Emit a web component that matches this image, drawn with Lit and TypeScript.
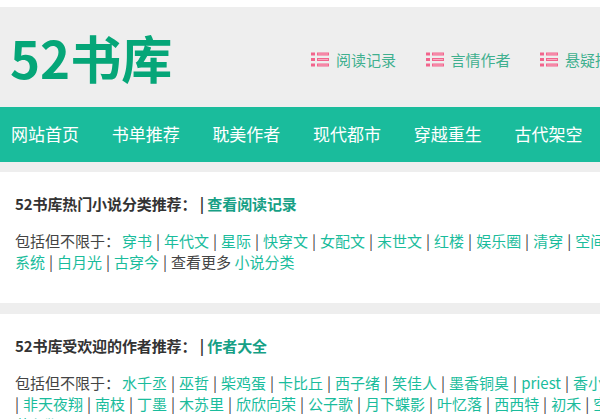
import { LitElement, html, css } from 'lit';
import { customElement } from 'lit/decorators.js';

const ListIcon = html`<svg class="icon" width="18" height="15" viewBox="0 0 18 15">
  <rect x="0" y="0.5" width="4" height="3"></rect><rect class="bar" x="6.5" y="1" width="11" height="2"></rect>
  <rect x="0" y="6" width="4" height="3"></rect><rect class="bar" x="6.5" y="6.5" width="11" height="2"></rect>
  <rect x="0" y="11.5" width="4" height="3"></rect><rect class="bar" x="6.5" y="12" width="11" height="2"></rect>
</svg>`;

const topLinks = ['阅读记录', '言情作者', '悬疑推理'];
const navItems = ['网站首页', '书单推荐', '耽美作者', '现代都市', '穿越重生', '古代架空', '玄幻奇幻'];

const sections = [
  {
    title: '52书库热门小说分类推荐：',
    more: '查看阅读记录',
    lines: [
      { label: true, lead: false, items: ['穿书', '年代文', '星际', '快穿文', '女配文', '末世文', '红楼', '娱乐圈', '清穿', '空间'] },
      { label: false, lead: false, items: ['系统', '白月光', '古穿今'], tail: true },
    ],
  },
  {
    title: '52书库受欢迎的作者推荐：',
    more: '作者大全',
    lines: [
      { label: true, lead: false, items: ['水千丞', '巫哲', '柴鸡蛋', '卡比丘', '西子绪', '笑佳人', '墨香铜臭', 'priest', '香小陌'] },
      { label: false, lead: true, items: ['非天夜翔', '南枝', '丁墨', '木苏里', '欣欣向荣', '公子歌', '月下蝶影', '叶忆落', '西西特', '初禾', '空梦'] },
      { label: false, lead: false, items: ['蓝色狮'] },
    ],
  },
];

@customElement('app-root')
export class AppRoot extends LitElement {
  static styles = css`
    :host {
      display: block;
      width: 600px;
      height: 419px;
      overflow: hidden;
      background: #fff;
      padding-top: 7px;
      box-sizing: border-box;
      font-family: 'Noto Sans CJK SC', 'Liberation Sans', sans-serif;
      font-size: 15px;
      color: #444;
    }
    .header {
      display: flex;
      align-items: center;
      height: 100px;
      background: #eee;
      padding-left: 10px;
      white-space: nowrap;
    }
    .logo {
      width: 301px;
      flex: none;
      font-size: 51px;
      font-weight: 700;
      line-height: 1;
      color: #05a678;
    }
    .top-links {
      display: flex;
      flex: none;
      margin-top: 4px;
    }
    .top-link {
      display: flex;
      align-items: center;
      gap: 7px;
      width: 114.5px;
      font-size: 15px;
      color: #3fb08f;
    }
    .icon {
      fill: #f2648c;
      flex: none;
    }
    .icon .bar {
      fill: #f9a9c0;
      stroke: #f2648c;
    }
    .nav {
      display: flex;
      height: 55px;
      align-items: center;
      background: #1abc9c;
      padding: 0 0 2px 11px;
      box-sizing: border-box;
      white-space: nowrap;
    }
    .nav span {
      flex: none;
      width: 100.7px;
      font-size: 17px;
      color: #fff;
    }
    .gap {
      height: 10px;
      background: #eee;
    }
    .section + .gap {
      height: 11px;
    }
    .section {
      height: 131px;
      padding: 21px 15px 0;
      box-sizing: border-box;
      white-space: nowrap;
      overflow: hidden;
    }
    .title {
      font-weight: 700;
      line-height: 21px;
      letter-spacing: -0.1px;
      color: #333;
      margin-bottom: 16px;
    }
    .title .more {
      color: #16a085;
    }
    .line {
      line-height: 21px;
    }
    .line a {
      color: #1abc9c;
      text-decoration: none;
    }
    .label {
      margin-right: 2px;
    }
    .sep {
      display: inline-block;
      width: 12px;
      text-align: center;
    }
    .sep.lead {
      width: 8px;
      text-align: left;
    }
  `;

  renderLine(line: { label: boolean; lead: boolean; items: string[]; tail?: boolean }) {
    return html`<div class="line">${line.label ? html`<span class="label">包括但不限于：</span>` : ''}${line.lead
        ? html`<span class="sep lead">|</span>`
        : ''}${line.items.map(
        (item, i) => html`${i > 0 ? html`<span class="sep">|</span>` : ''}<a>${item}</a>`
      )}${line.tail ? html`<span class="sep">|</span>查看更多 <a>小说分类</a>` : ''}</div>`;
  }

  render() {
    return html`
      <div class="header">
        <div class="logo">52书库</div>
        <div class="top-links">
          ${topLinks.map((t) => html`<div class="top-link">${ListIcon}<span>${t}</span></div>`)}
        </div>
      </div>
      <div class="nav">${navItems.map((n) => html`<span>${n}</span>`)}</div>
      <div class="gap"></div>
      ${sections.map(
        (s) => html`
          <div class="section">
            <div class="title">${s.title} | <span class="more">${s.more}</span></div>
            ${s.lines.map((l) => this.renderLine(l))}
          </div>
          <div class="gap"></div>
        `
      )}
    `;
  }
}
